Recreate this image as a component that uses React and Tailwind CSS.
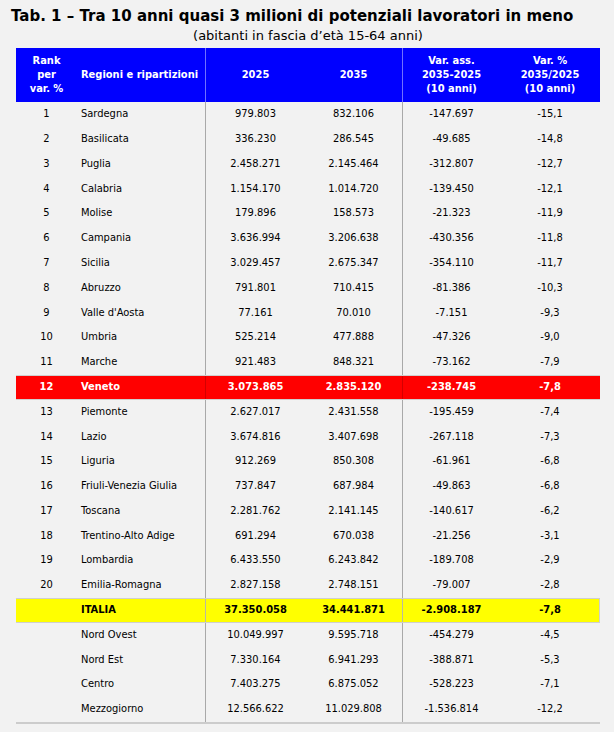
import React from "react";

const rows = [
  ["1", "Sardegna", "979.803", "832.106", "-147.697", "-15,1"],
  ["2", "Basilicata", "336.230", "286.545", "-49.685", "-14,8"],
  ["3", "Puglia", "2.458.271", "2.145.464", "-312.807", "-12,7"],
  ["4", "Calabria", "1.154.170", "1.014.720", "-139.450", "-12,1"],
  ["5", "Molise", "179.896", "158.573", "-21.323", "-11,9"],
  ["6", "Campania", "3.636.994", "3.206.638", "-430.356", "-11,8"],
  ["7", "Sicilia", "3.029.457", "2.675.347", "-354.110", "-11,7"],
  ["8", "Abruzzo", "791.801", "710.415", "-81.386", "-10,3"],
  ["9", "Valle d'Aosta", "77.161", "70.010", "-7.151", "-9,3"],
  ["10", "Umbria", "525.214", "477.888", "-47.326", "-9,0"],
  ["11", "Marche", "921.483", "848.321", "-73.162", "-7,9"],
  ["12", "Veneto", "3.073.865", "2.835.120", "-238.745", "-7,8", "red"],
  ["13", "Piemonte", "2.627.017", "2.431.558", "-195.459", "-7,4"],
  ["14", "Lazio", "3.674.816", "3.407.698", "-267.118", "-7,3"],
  ["15", "Liguria", "912.269", "850.308", "-61.961", "-6,8"],
  ["16", "Friuli-Venezia Giulia", "737.847", "687.984", "-49.863", "-6,8"],
  ["17", "Toscana", "2.281.762", "2.141.145", "-140.617", "-6,2"],
  ["18", "Trentino-Alto Adige", "691.294", "670.038", "-21.256", "-3,1"],
  ["19", "Lombardia", "6.433.550", "6.243.842", "-189.708", "-2,9"],
  ["20", "Emilia-Romagna", "2.827.158", "2.748.151", "-79.007", "-2,8"],
  ["", "ITALIA", "37.350.058", "34.441.871", "-2.908.187", "-7,8", "yellow"],
  ["", "Nord Ovest", "10.049.997", "9.595.718", "-454.279", "-4,5"],
  ["", "Nord Est", "7.330.164", "6.941.293", "-388.871", "-5,3"],
  ["", "Centro", "7.403.275", "6.875.052", "-528.223", "-7,1"],
  ["", "Mezzogiorno", "12.566.622", "11.029.808", "-1.536.814", "-12,2"],
];

const cols = "grid grid-cols-[61px_129px_99px_98px_97px_100px]";

function Row({ r }) {
  const kind = r[6];
  let rowCls = "text-black";
  let divider = "border-[#a9a9a9]";
  if (kind === "red") {
    rowCls = "bg-[#ff0000] text-white font-bold border-y border-[#cfcfcf]";
    divider = "border-[#d40000]";
  } else if (kind === "yellow") {
    rowCls = "bg-[#ffff00] text-black font-bold border-y border-r border-[#cfcfcf]";
    divider = "border-[#b9b9a0]";
  }
  return (
    <div className={`${cols} h-[24.8px] ${rowCls}`}>
      <div className="flex items-center justify-center">{r[0]}</div>
      <div className={`flex items-center pl-[4px] border-r ${divider}`}>{r[1]}</div>
      <div className="flex items-center justify-center">{r[2]}</div>
      <div className={`flex items-center justify-center border-r ${divider}`}>{r[3]}</div>
      <div className="flex items-center justify-center">{r[4]}</div>
      <div className="flex items-center justify-center">{r[5]}</div>
    </div>
  );
}

export default function App() {
  return (
    <div className="w-[614px] h-[732px] bg-[#f2f2f2] font-['DejaVu_Sans_Condensed','DejaVu_Sans',sans-serif] overflow-hidden">
      {/* title and subtitle use the regular width, the table the condensed one */}
      <div className="pl-[11px] pt-[6px] h-[27px] text-[15px] leading-[20px] font-bold text-black font-['DejaVu_Sans',sans-serif]">
        Tab. 1 – Tra 10 anni quasi 3 milioni di potenziali lavoratori in meno
      </div>
      <div className="text-center pl-[2px] h-[21px] text-[13px] leading-[18px] text-black font-['DejaVu_Sans',sans-serif]">
        (abitanti in fascia d’età 15-64 anni)
      </div>
      <div className="ml-[16px] w-[584px] text-[11px] font-stretch-condensed">
        <div className={`${cols} h-[54px] bg-[#0000ff] text-white font-bold leading-[14px]`}>
          <div className="flex items-center justify-center text-center">
            Rank
            <br />
            per
            <br />
            var. %
          </div>
          <div className="flex items-center pl-[4px] border-r border-[#7070ff]">
            Regioni e ripartizioni
          </div>
          <div className="flex items-center justify-center">2025</div>
          <div className="flex items-center justify-center border-r border-[#7070ff]">2035</div>
          <div className="flex items-center justify-center text-center">
            Var. ass.
            <br />
            2035-2025
            <br />
            (10 anni)
          </div>
          <div className="flex items-center justify-center text-center">
            Var. %
            <br />
            2035/2025
            <br />
            (10 anni)
          </div>
        </div>
        {rows.map((r, i) => (
          <Row key={i} r={r} />
        ))}
        <div className="h-[2px] bg-[#cccccc]" />
      </div>
    </div>
  );
}
